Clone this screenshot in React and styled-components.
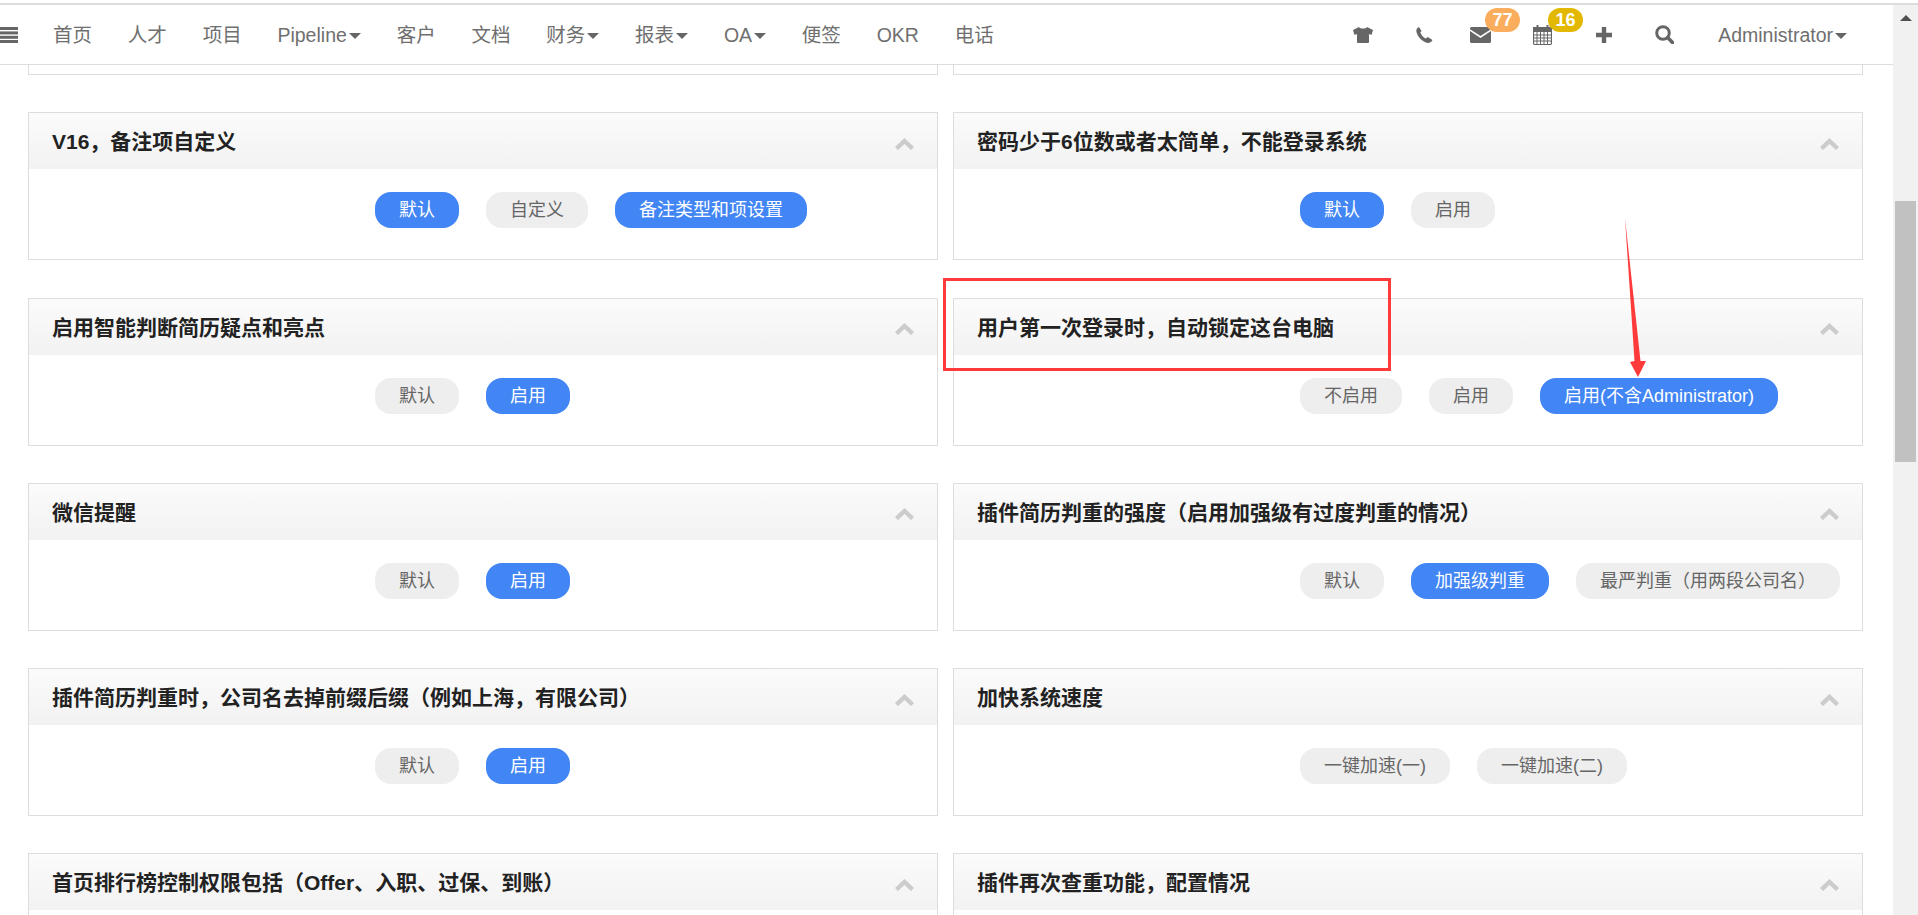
import React from 'react';
import styled, { createGlobalStyle } from 'styled-components';

const GlobalStyle = createGlobalStyle`
  html, body {
    margin: 0;
    padding: 0;
    height: 100%;
    overflow: hidden;
    background: white;
    font-family: 'Liberation Sans', 'Noto Sans CJK SC', sans-serif;
  }
  * {
    box-sizing: border-box;
  }
`;

const Screen = styled.div`
  position: relative;
  width: 1918px;
  height: 915px;
  overflow: hidden;
  background: white;
  padding-top: 3px;
  display: flex;
  flex-direction: column;
`;

const TopLine = styled.div`
  height: 2px;
  flex-shrink: 0;
  background: #dddddd;
`;

const Body = styled.div`
  flex: 1;
  min-height: 0;
  display: flex;
`;

const Main = styled.div`
  width: 1893px;
  display: flex;
  flex-direction: column;
`;

const Nav = styled.div`
  height: 60px;
  flex-shrink: 0;
  background: white;
  border-bottom: 1px solid #dddddd;
  padding-right: 46px;
  display: flex;
  align-items: center;
`;

const MenuButton = styled.div`
  width: 53px;
  display: flex;
  align-items: center;
`;

const NavLinks = styled.div`
  display: flex;
  align-items: center;
  gap: 35.8px;
`;

const NavLink = styled.div`
  color: #6f6f6f;
  font-size: 19.5px;
  line-height: 24px;
  white-space: nowrap;
  display: flex;
  align-items: center;
`;

const Caret = styled.span`
  width: 0;
  height: 0;
  margin-left: 2px;
  margin-top: 2px;
  border-left: 6px solid transparent;
  border-right: 6px solid transparent;
  border-top: 6px solid #666666;
`;

const NavTools = styled.div`
  margin-left: auto;
  height: 100%;
  display: flex;
  align-items: center;
`;

const ToolSlot = styled.div`
  position: relative;
  width: ${props => props.$width}px;
  height: 100%;
  display: flex;
  align-items: center;
  justify-content: center;
`;

const Badge = styled.div`
  position: absolute;
  left: 36px;
  top: 3px;
  width: 35px;
  height: 24px;
  border-radius: 12px;
  background: ${props => props.$color};
  color: white;
  font-size: 18px;
  font-weight: 700;
  line-height: 24px;
  text-align: center;
`;

const UserMenu = styled(NavLink)`
  margin-left: 23px;
`;

const Content = styled.div`
  flex: 1;
  min-height: 0;
  overflow: hidden;
  padding: 0 30px 0 28px;
  display: grid;
  grid-template-columns: 910px 910px;
  grid-auto-rows: min-content;
  column-gap: 15px;
  row-gap: 37.25px;
`;

const StubCard = styled.div`
  height: 10px;
  border: 1px solid #dddddd;
  border-top: none;
`;

const Card = styled.div`
  height: 148px;
  background: white;
  border: 1px solid #dddddd;
`;

const CardHeader = styled.div`
  height: 56px;
  padding: 0 23px;
  background: linear-gradient(to bottom, #fbfbfb, #f2f2f2);
  display: flex;
  align-items: center;
  justify-content: space-between;
`;

const CardTitle = styled.div`
  color: #222222;
  font-size: 21px;
  font-weight: 700;
  padding-bottom: 2px;
  white-space: nowrap;
`;

const CardBody = styled.div`
  padding: 23px 0 0 346px;
  display: flex;
  gap: 27px;
`;

const Pill = styled.div`
  height: 36px;
  padding: 0 24px;
  border-radius: 16px;
  background: ${props => props.$active ? '#4285f4' : '#eeeeee'};
  color: ${props => props.$active ? 'white' : '#666666'};
  font-size: 18px;
  line-height: 36px;
  white-space: nowrap;
`;

const Chevron = styled.svg`
  margin-top: 5px;
`;

const ScrollTrack = styled.div`
  width: 25px;
  background: #f1f1f1;
  display: flex;
  flex-direction: column;
  align-items: center;
`;

const ScrollArrow = styled.div`
  width: 0;
  height: 0;
  margin-top: 10px;
  border-left: 6px solid transparent;
  border-right: 6px solid transparent;
  border-bottom: 6px solid #505050;
`;

const ScrollThumb = styled.div`
  width: 21px;
  height: 261px;
  margin-top: 180px;
  background: #c1c1c1;
`;

const RedBox = styled.div`
  position: absolute;
  left: 943px;
  top: 278px;
  width: 448px;
  height: 93px;
  border: 3px solid #ff3a3a;
`;

const RedArrow = styled.svg`
  position: absolute;
  left: 1620px;
  top: 215px;
`;

const GREY = '#666666';

const MenuIcon = () => (
  <svg width="18" height="16" viewBox="0 0 18 16" fill={GREY}>
    <rect y="0" width="18" height="3" />
    <rect y="4.4" width="18" height="3" />
    <rect y="8.8" width="18" height="3" />
    <rect y="13" width="18" height="3" />
  </svg>
);

const ShirtIcon = () => (
  <svg width="20" height="16" viewBox="0 0 20 16" fill={GREY}>
    <path d="M6 0 L0 3 L1.5 8 L4 7 V15 Q4 16 5 16 H15 Q16 16 16 15 V7 L18.5 8 L20 3 L14 0 C13 2 7 2 6 0 Z" />
  </svg>
);

const PhoneIcon = () => (
  <svg width="17" height="16" viewBox="0 0 17 16" fill={GREY}>
    <path d="M3 0 L5.5 4 L4.3 5.6 C5.2 8.2 7.2 10.4 9.8 11.5 L11.8 10 L16.5 13 C15.6 15 13.8 16 12 16 C6.5 15 1 9.5 0.3 4 C0.3 2.2 1.2 0.8 3 0 Z" />
  </svg>
);

const MailIcon = () => (
  <svg width="21" height="16" viewBox="0 0 21 16">
    <rect width="21" height="16" rx="1.5" fill={GREY} />
    <path d="M-1 2.5 L10.5 10 L22 2.5" fill="none" stroke="white" strokeWidth="1.6" />
  </svg>
);

const CalendarIcon = () => (
  <svg width="19" height="20" viewBox="0 0 19 20" fill="none" stroke={GREY}>
    <rect x="0.5" y="2.5" width="18" height="17" rx="1.5" strokeWidth="1.2" />
    <rect x="0.5" y="2.5" width="18" height="4" fill={GREY} strokeWidth="1" />
    <path d="M4.5 0.5 V4 M14.5 0.5 V4" strokeWidth="2" strokeLinecap="round" />
    <path d="M0.5 10 H18.5 M0.5 13 H18.5 M0.5 16 H18.5 M4 7 V19 M7.5 7 V19 M11 7 V19 M14.5 7 V19" strokeWidth="1" />
  </svg>
);

const PlusIcon = () => (
  <svg width="16" height="16" viewBox="0 0 16 16" fill={GREY}>
    <path d="M5.8 0 H10.2 V5.8 H16 V10.2 H10.2 V16 H5.8 V10.2 H0 V5.8 H5.8 Z" />
  </svg>
);

const SearchIcon = () => (
  <svg width="19" height="19" viewBox="0 0 19 19" fill="none" stroke={GREY}>
    <circle cx="8" cy="8" r="6.3" strokeWidth="3" />
    <path d="M12.6 12.6 L17.5 17.5" strokeWidth="3.6" strokeLinecap="round" />
  </svg>
);

const ChevronUp = () => (
  <Chevron width="19" height="12" viewBox="0 0 19 12" fill="none" stroke="#cccccc" strokeWidth="4.4">
    <path d="M1.5 10.5 L9.5 3 L17.5 10.5" />
  </Chevron>
);

const navLinks = [
  { label: '首页' },
  { label: '人才' },
  { label: '项目' },
  { label: 'Pipeline', caret: true },
  { label: '客户' },
  { label: '文档' },
  { label: '财务', caret: true },
  { label: '报表', caret: true },
  { label: 'OA', caret: true },
  { label: '便签' },
  { label: 'OKR' },
  { label: '电话' },
];

const tools = [
  { icon: <ShirtIcon />, width: 72 },
  { icon: <PhoneIcon />, width: 50 },
  { icon: <MailIcon />, width: 63, badge: '77', color: '#fbad5e' },
  { icon: <CalendarIcon />, width: 61, badge: '16', color: '#e2b900' },
  { icon: <PlusIcon />, width: 61 },
  { icon: <SearchIcon />, width: 61 },
];

const settings = [
  {
    title: 'V16，备注项自定义',
    options: [
      { label: '默认', active: true },
      { label: '自定义' },
      { label: '备注类型和项设置', active: true },
    ],
  },
  {
    title: '密码少于6位数或者太简单，不能登录系统',
    options: [{ label: '默认', active: true }, { label: '启用' }],
  },
  {
    title: '启用智能判断简历疑点和亮点',
    options: [{ label: '默认' }, { label: '启用', active: true }],
  },
  {
    title: '用户第一次登录时，自动锁定这台电脑',
    options: [
      { label: '不启用' },
      { label: '启用' },
      { label: '启用(不含Administrator)', active: true },
    ],
  },
  {
    title: '微信提醒',
    options: [{ label: '默认' }, { label: '启用', active: true }],
  },
  {
    title: '插件简历判重的强度（启用加强级有过度判重的情况）',
    options: [
      { label: '默认' },
      { label: '加强级判重', active: true },
      { label: '最严判重（用两段公司名）' },
    ],
  },
  {
    title: '插件简历判重时，公司名去掉前缀后缀（例如上海，有限公司）',
    options: [{ label: '默认' }, { label: '启用', active: true }],
  },
  {
    title: '加快系统速度',
    options: [{ label: '一键加速(一)' }, { label: '一键加速(二)' }],
  },
  { title: '首页排行榜控制权限包括（Offer、入职、过保、到账）', options: [] },
  { title: '插件再次查重功能，配置情况', options: [] },
];

const App = () => {
  return (
    <Screen>
      <GlobalStyle />
      <TopLine />
      <Body>
        <Main>
          <Nav>
            <MenuButton>
              <MenuIcon />
            </MenuButton>
            <NavLinks>
              {navLinks.map(link => (
                <NavLink key={link.label}>
                  {link.label}
                  {link.caret && <Caret />}
                </NavLink>
              ))}
            </NavLinks>
            <NavTools>
              {tools.map((tool, index) => (
                <ToolSlot key={index} $width={tool.width}>
                  {tool.icon}
                  {tool.badge && <Badge $color={tool.color}>{tool.badge}</Badge>}
                </ToolSlot>
              ))}
              <UserMenu>
                Administrator
                <Caret />
              </UserMenu>
            </NavTools>
          </Nav>
          <Content>
            <StubCard />
            <StubCard />
            {settings.map(item => (
              <Card key={item.title}>
                <CardHeader>
                  <CardTitle>{item.title}</CardTitle>
                  <ChevronUp />
                </CardHeader>
                <CardBody>
                  {item.options.map(option => (
                    <Pill key={option.label} $active={option.active}>{option.label}</Pill>
                  ))}
                </CardBody>
              </Card>
            ))}
          </Content>
        </Main>
        <ScrollTrack>
          <ScrollArrow />
          <ScrollThumb />
        </ScrollTrack>
      </Body>
      {/* 스크린샷 위에 그려진 빨간 표시 */}
      <RedBox />
      <RedArrow width="30" height="165" viewBox="0 0 30 165">
        <polygon points="5,3 14.5,146 10,147 18,162 26,146 20.5,146" fill="#ff3a3a" />
      </RedArrow>
    </Screen>
  );
};

export default App;
